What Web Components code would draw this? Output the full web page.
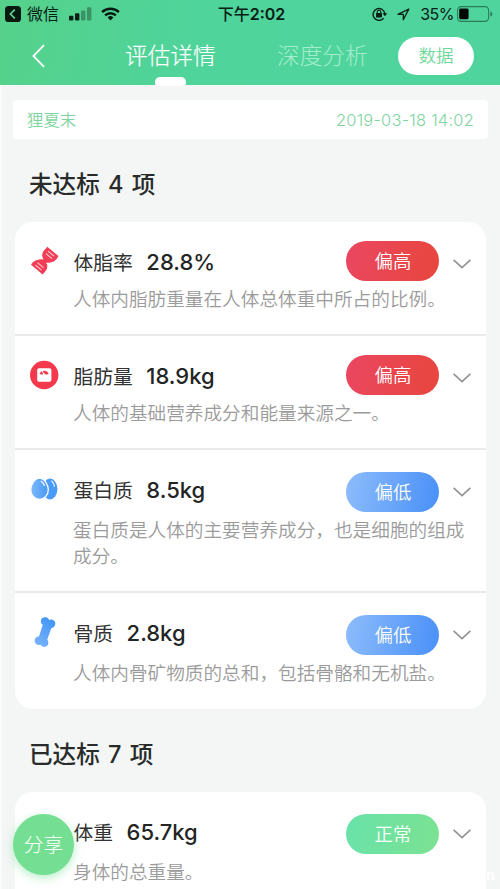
<!DOCTYPE html>
<html lang="zh-CN">
<head>
<meta charset="utf-8">
<title>评估详情</title>
<style>
html,body{margin:0;height:889px;overflow:hidden;background:linear-gradient(90deg,#fafbfb 2px,#f3f6f5 2px);font-family:Inter,"Noto Sans CJK SC",sans-serif}
</style>
</head>
<body>
<health-app></health-app>
<script>
const define = (name, html, setup) => customElements.define(name, class extends HTMLElement {
  connectedCallback() {
    if (this.shadowRoot) return;
    const t = document.createElement('template');
    t.innerHTML = html;
    this.attachShadow({mode: 'open'}).append(t.content.cloneNode(true));
    if (setup) setup(this, this.shadowRoot);
  }
});

define('status-bar', `<style>
:host{display:grid;grid-template-columns:1fr auto 1fr;align-items:center;height:28px;box-sizing:border-box;padding:0 7px 0 5px;color:#0b2015;font-size:16px;line-height:28px}
.l,.r{display:flex;align-items:center}.r{justify-content:flex-end}
svg{display:block;flex:none}.t{font-weight:500;padding-left:5px}.t b{font-weight:600}
</style>
<div class="l"><svg width="16" height="16" viewBox="0 0 16 16"><rect width="16" height="16" rx="3.6" fill="#071a10"/><path d="M9.8 3.6 5.4 8l4.4 4.4" fill="none" stroke="#62d994" stroke-width="1.6"/></svg>
<span style="margin-left:6px">微信</span>
<svg style="margin-left:10px" width="23" height="14" viewBox="0 0 23 14"><g fill="#0b1f14"><rect y="8.8" width="4.4" height="4.7" rx="1"/><rect x="6" y="6.2" width="4.4" height="7.3" rx="1"/><g opacity=".35"><rect x="12" y="3.4" width="4.4" height="10.1" rx="1"/><rect x="18" y=".3" width="4.4" height="13.2" rx="1"/></g></g></svg>
<svg style="margin-left:9px" width="19" height="14" viewBox="0 0 19 14"><g fill="none" stroke="#071a10" stroke-width="2.4"><path d="M1.1 5.2a12 12 0 0 1 16.8 0"/><path d="M4.1 8.4a7.7 7.7 0 0 1 10.8 0"/></g><path d="M9.5 13.4 6.6 10.4a4.2 4.2 0 0 1 5.8 0z" fill="#071a10"/></svg></div>
<div class="t">下午<b>2:02</b></div>
<div class="r"><svg width="16" height="14" viewBox="0 0 16 14"><path d="M11.6 11.2A5.9 5.9 0 1 1 12.9 7" fill="none" stroke="#0b2015" stroke-width="1.4"/><path d="m10.5 6.3 4.8 0-2.4 3z" fill="#0b2015"/><rect x="4" y="6" width="6" height="4.4" rx=".6" fill="#0b2015"/><path d="M5.2 6.4V5a1.8 1.8 0 0 1 3.6 0v1.4" fill="none" stroke="#0b2015" stroke-width="1.1"/></svg>
<svg style="margin-left:9px" width="13" height="13" viewBox="0 0 13 13"><path d="M11.8 1.1.9 6.3h5.4v5.5z" fill="none" stroke="#0b2015" stroke-width="1.3" stroke-linejoin="round"/></svg>
<span style="margin:0 3px 0 10px;letter-spacing:-.5px">35%</span>
<svg width="36" height="16" viewBox="0 0 36 16"><rect x=".6" y=".6" width="31" height="14.8" rx="3.6" fill="none" stroke="#0b2015" stroke-opacity=".5" stroke-width="1.1"/><rect x="2.2" y="2.6" width="9.4" height="10.6" rx="1.4" fill="#020805"/><path d="M33.4 5.3q2 1 2 2.7t-2 2.7z" fill="#0b2015" opacity=".5"/></svg></div>`);

define('nav-bar', `<style>
:host{display:grid;grid-template-columns:125px 152px 121px 76px;height:57px;color:#fff;font-size:22.7px;font-weight:350;line-height:33px}
svg{margin:16px 0 0 32px;display:block}
.tab{padding-top:11px;height:46px;white-space:nowrap}.tab i{display:block;width:31px;height:9px;border-radius:5px 5px 3px 3px;background:#fff;margin:5px 0 0 30px}
.dim{color:#a4edcc;font-weight:300}
.btn{margin-top:9px;height:38px;border-radius:19px;background:#fff;color:#6ed79a;font-size:17.5px;line-height:37px;text-align:center}
</style>
<svg width="14" height="24" viewBox="0 0 14 24"><path d="M12 1.2 1.4 12 12 22.8" fill="none" stroke="#fff" stroke-width="1.8"/></svg>
<div class="tab" style="font-weight:300;-webkit-text-stroke:.2px #fff">评估详情<i></i></div><div class="tab dim">深度分析</div><div class="btn">数据</div>`);

define('user-strip', `<style>
:host{display:flex;justify-content:space-between;align-items:center;height:39px;box-sizing:border-box;margin:15px 12px 0 13px;padding:0 14px 1px;background:#fff;border-radius:4px;color:#7fd49f;font-size:16.4px;font-weight:350}
.d{letter-spacing:.25px;padding-top:1px}
</style><span class="n"><slot name="name"></slot></span><span class="d"><slot name="date"></slot></span>`);

define('section-title', `<style>
:host{display:block;height:83px;box-sizing:border-box;padding:28px 0 0 29px;font-size:23.6px;line-height:35px;color:#292b2a;font-weight:500;white-space:pre;word-spacing:2px}
</style><slot></slot>`);

define('metric-card', `<style>:host{display:block;margin:0 14px 0 15px;background:#fff;border-radius:18px}</style><slot></slot>`);

define('status-pill', `<style>
:host{display:block;width:93px;height:40px;border-radius:20px;color:#fff;font-size:18.4px;line-height:40px;font-weight:350;text-align:center;background:linear-gradient(100deg,#ea4761,#e8463d)}
:host([kind=low]){background:linear-gradient(100deg,#8dbcfb,#4990f8)}
:host([kind=ok]){background:linear-gradient(100deg,#69e2a9,#7be292)}
</style><slot></slot>`);

const icons = {
dna:'<path d="M18.3.7 29.4 10Q27.5 15 22.3 16.3q-3 .6-5.3.5Q19.6 20.5 17 24.4L13.7 28.6 2 18.7Q3.6 15.3 8 13.9q3.6-.8 6.5-.4Q12 9.6 14.2 5.6z" fill="#f23d56"/><path d="m19 5.2 6 5M17 7.7l6 5M8.5 16.7l6 5M6.5 19.2l6 5" stroke="#fff" stroke-width="1.1" opacity=".75"/>',
scale:'<circle cx="15.2" cy="15" r="14.2" fill="#f5394d"/><rect x="8.2" y="8.2" width="14.2" height="13.6" rx="1.8" fill="#fff"/><path d="M10.5 14.1a4.8 4.8 0 0 1 9.2 0l-2.8.7a1.9 1.9 0 0 0-3.6 0z" fill="#f5394d"/><path d="m14.8 14.3-1.5-3.4" stroke="#fff" stroke-width="1"/>',
egg:'<defs><linearGradient id="g"><stop stop-color="#80b8fa"/><stop offset="1" stop-color="#479af8"/></linearGradient></defs><ellipse cx="21" cy="15" rx="7.4" ry="10.4" fill="#4a9af8"/><path d="M10.5 4.2c4.8 0 8.8 6.6 8.8 11.5s-3.8 9.7-8.8 9.7-8.8-4.6-8.8-9.7 4-11.5 8.8-11.5z" fill="url(#g)" stroke="#fff" stroke-width="1.3"/><path d="M12.2 7.2q2.4 1.5 3.2 4.3M22.7 7.1q2.4 2 2.6 5" stroke="#fff" stroke-width="1.2" fill="none" stroke-linecap="round"/>',
bone:'<defs><linearGradient id="g" gradientUnits="userSpaceOnUse" x1="8" y1="28" x2="23" y2="3"><stop stop-color="#79b2fb"/><stop offset="1" stop-color="#4296f7"/></linearGradient></defs><g fill="url(#g)"><circle cx="16" cy="4.3" r="4.1"/><circle cx="22.1" cy="6.8" r="4.2"/><circle cx="9.8" cy="23.8" r="4.2"/><circle cx="15.2" cy="25.8" r="4.1"/><path d="m14.2 6.5 8.6 3.2-5.4 15.3-8.4-2.6z"/></g>',
none:''};
define('metric-row', `<style>
:host{display:grid;grid-template-columns:58px 1fr 93px 14px 18px 15px;grid-template-rows:40px auto;box-sizing:border-box;padding-top:19px;height:var(--h,113px)}
:host([line]){border-bottom:2px solid #e8ebea}
.ic{padding:5px 0 0 14px}.ic svg{display:block}
.head{display:flex;align-items:baseline;color:#333;white-space:nowrap;padding:6px 0 0 .5px}
.n{font-size:19.8px;line-height:32px}.v{font-size:22px;font-weight:500;color:#232524;margin-left:13.5px}
status-pill{margin:var(--drop,0px) -.4px 0 .4px}
.ch{grid-column:5;padding-top:18px}.ch svg{display:block}
.desc{grid-column:2/7;font-size:18.65px;line-height:25.5px;font-weight:350;color:#9b9b9b;padding:calc(6px + var(--drop,0px)) 14px 0 0}
</style>
<div class="ic"><svg width="30" height="30" viewBox="0 0 30 30"></svg></div>
<div class="head"><span class="n"></span><span class="v"></span></div>
<status-pill></status-pill>
<div class="ch"><svg width="18" height="10" viewBox="0 0 18 10"><path d="M.6.8 9 8.6 17.4.8" fill="none" stroke="#929292" stroke-width="1.6"/></svg></div>
<div class="desc"><slot></slot></div>`, (h, r) => {
  r.querySelector('.ic svg').innerHTML = icons[h.getAttribute('icon')];
  r.querySelector('.n').textContent = h.getAttribute('name');
  r.querySelector('.v').textContent = h.getAttribute('value');
  const p = r.querySelector('status-pill');
  p.textContent = h.getAttribute('status');
  p.setAttribute('kind', h.getAttribute('kind'));
});

define('share-button', `<style>
:host{position:absolute;left:13px;top:814px;width:61px;height:61px;border-radius:50%;background:#74df93;color:#fff;font-size:19.8px;line-height:62px;font-weight:300;text-align:center;box-shadow:0 3px 8px #74df9380}
</style><slot></slot>`);

define('health-app', `<style>
:host{display:block;position:relative;width:500px;height:889px;overflow:hidden}
header{height:85px;background:linear-gradient(100deg,#55d18a,#4fd49c 40%,#4fd49e)}
.wm{position:absolute;left:486px;top:866px;font:bold 16px/18px "Liberation Serif",serif;color:#fff}
</style>
<header><status-bar></status-bar><nav-bar></nav-bar></header>
<user-strip><span slot="name">狸夏末</span><span slot="date">2019-03-18 14:02</span></user-strip>
<section-title>未达标 4 项</section-title>
<metric-card>
<metric-row line icon="dna" name="体脂率" value="28.8%" status="偏高" kind="high" style="--h:114px">人体内脂肪重量在人体总体重中所占的比例。</metric-row>
<metric-row line icon="scale" name="脂肪量" value="18.9kg" status="偏高" kind="high" style="--h:114px">人体的基础营养成分和能量来源之一。</metric-row>
<metric-row line icon="egg" name="蛋白质" value="8.5kg" status="偏低" kind="low" style="--h:143px;--drop:3px">蛋白质是人体的主要营养成分，也是细胞的组成成分。</metric-row>
<metric-row icon="bone" name="骨质" value="2.8kg" status="偏低" kind="low" style="--h:116px;--drop:3px">人体内骨矿物质的总和，包括骨骼和无机盐。</metric-row>
</metric-card>
<section-title>已达标 7 项</section-title>
<metric-card><metric-row icon="none" name="体重" value="65.7kg" status="正常" kind="ok" style="--h:130px;--drop:3px">身体的总重量。</metric-row></metric-card>
<share-button>分享</share-button>
<span class="wm">n</span>`);
</script>
</body>
</html>
